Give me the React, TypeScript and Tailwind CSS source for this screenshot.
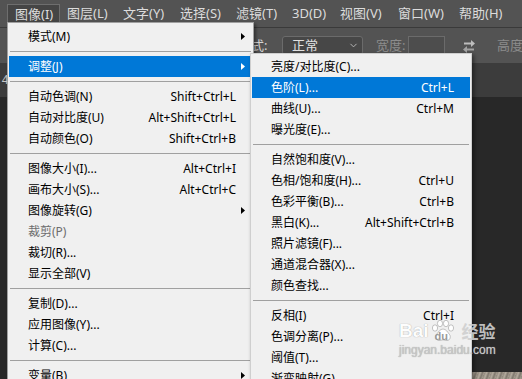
import { ChevronDown } from "lucide-react"

type Item =
  | "sep"
  | { label: string; shortcut?: string; arrow?: boolean; active?: boolean; disabled?: boolean }

const topMenus = [
  { label: "图像(I)", w: "w-[53px]", open: true },
  { label: "图层(L)", w: "w-[56px]" },
  { label: "文字(Y)", w: "w-[57px]" },
  { label: "选择(S)", w: "w-[56px]" },
  { label: "滤镜(T)", w: "w-[56px]" },
  { label: "3D(D)", w: "w-[48px]" },
  { label: "视图(V)", w: "w-[58px]" },
  { label: "窗口(W)", w: "w-[61px]" },
  { label: "帮助(H)", w: "w-[60px]" },
]

const imageMenu: Item[] = [
  { label: "模式(M)", arrow: true },
  "sep",
  { label: "调整(J)", arrow: true, active: true },
  "sep",
  { label: "自动色调(N)", shortcut: "Shift+Ctrl+L" },
  { label: "自动对比度(U)", shortcut: "Alt+Shift+Ctrl+L" },
  { label: "自动颜色(O)", shortcut: "Shift+Ctrl+B" },
  "sep",
  { label: "图像大小(I)...", shortcut: "Alt+Ctrl+I" },
  { label: "画布大小(S)...", shortcut: "Alt+Ctrl+C" },
  { label: "图像旋转(G)", arrow: true },
  { label: "裁剪(P)", disabled: true },
  { label: "裁切(R)..." },
  { label: "显示全部(V)" },
  "sep",
  { label: "复制(D)..." },
  { label: "应用图像(Y)..." },
  { label: "计算(C)..." },
  "sep",
  { label: "变量(B)", arrow: true },
]

const adjustMenu: Item[] = [
  { label: "亮度/对比度(C)..." },
  { label: "色阶(L)...", shortcut: "Ctrl+L", active: true },
  { label: "曲线(U)...", shortcut: "Ctrl+M" },
  { label: "曝光度(E)..." },
  "sep",
  { label: "自然饱和度(V)..." },
  { label: "色相/饱和度(H)...", shortcut: "Ctrl+U" },
  { label: "色彩平衡(B)...", shortcut: "Ctrl+B" },
  { label: "黑白(K)...", shortcut: "Alt+Shift+Ctrl+B" },
  { label: "照片滤镜(F)..." },
  { label: "通道混合器(X)..." },
  { label: "颜色查找..." },
  "sep",
  { label: "反相(I)", shortcut: "Ctrl+I" },
  { label: "色调分离(P)..." },
  { label: "阈值(T)..." },
  { label: "渐变映射(G)..." },
]

function Arrow({ white }: { white?: boolean }) {
  return (
    <svg width="4" height="7" viewBox="0 0 4 7" className={white ? "fill-white" : "fill-black"}>
      <polygon points="0,0 4,3.5 0,7" />
    </svg>
  )
}

function MenuList({ items }: { items: Item[] }) {
  return (
    <>
      {items.map((item, i) =>
        item === "sep" ? (
          <div key={i} className="flex h-[9px] items-center px-px">
            <div className="h-px w-full bg-[#a0a0a0]" />
          </div>
        ) : (
          <div
            key={i}
            className={`flex h-[21px] items-center pl-[19px] ${
              item.active ? "bg-[#0078d7] text-white" : item.disabled ? "text-[#6d6d6d]" : "text-black"
            }`}
          >
            <span className="flex-1 whitespace-nowrap">{item.label}</span>
            {item.shortcut && <span className="whitespace-nowrap">{item.shortcut}</span>}
            <span className="flex w-[16px] items-center pl-[5px]">
              {item.arrow && <Arrow white={item.active} />}
            </span>
          </div>
        ),
      )}
    </>
  )
}

function SwapIcon() {
  return (
    <svg width="12" height="14" viewBox="0 0 12 14" className="fill-[#bdbdbd]">
      <path d="M1 3.5h7V1l4 3.5L8 8V5.5H1z" />
      <path d="M11 9.5H4V7L0 10.5 4 14v-2.5h7z" opacity="0.75" />
    </svg>
  )
}

function Paw() {
  return (
    <svg width="26" height="22" viewBox="0 0 26 22" className="fill-white stroke-[#9a9a9a]" strokeWidth="0.6">
      <ellipse cx="5" cy="8" rx="2.6" ry="3.2" />
      <ellipse cx="10" cy="3.5" rx="2.6" ry="3.2" />
      <ellipse cx="16" cy="3.5" rx="2.6" ry="3.2" />
      <ellipse cx="21" cy="8" rx="2.6" ry="3.2" />
      <path d="M13 9c-3 0-4.5 3-6.5 5.5C4.8 16.7 6 20.5 9 20.5c1.6 0 2.6-.7 4-.7s2.4.7 4 .7c3 0 4.2-3.8 2.5-6C17.5 12 16 9 13 9z" />
    </svg>
  )
}

export default function App() {
  return (
    <div className="relative h-[379px] w-[522px] overflow-hidden bg-[#282828] font-['Noto_Sans','Noto_Sans_CJK_SC',sans-serif] text-[12px]">
      {/* menu bar */}
      <div className="flex h-[27px] items-start bg-[#535353] pl-[7px] pt-[4px] text-[13px] text-[#dcdcdc]">
        {topMenus.map((m) => (
          <div
            key={m.label}
            className={`${m.w} h-[19px] shrink-0 whitespace-nowrap pl-[7px] leading-[18px] ${
              m.open ? "border border-b-0 border-[#6e6e6e] bg-[#454545] pl-[6px]" : ""
            }`}
          >
            {m.label}
          </div>
        ))}
      </div>
      <div className="h-px bg-[#3a3a3a]" />

      {/* options bar */}
      <div className="flex h-[35px] items-center whitespace-nowrap bg-[#535353] text-[13px]">
        <span className="ml-[238px] w-[37px] shrink-0 text-[#d4d4d4]">模式:</span>
        <div className="ml-[7px] flex h-[19px] w-[81px] shrink-0 items-center justify-between rounded-[3px] border border-[#6b6b6b] bg-[#474747] pl-[9px] pr-[3px] text-[#e2e2e2]">
          <span>正常</span>
          <ChevronDown size={11} className="text-[#bcbcbc]" />
        </div>
        <span className="ml-[13px] w-[29px] shrink-0 text-[#8c8c8c]">宽度:</span>
        <div className="ml-[3px] h-[19px] w-[37px] shrink-0 border border-[#6b6b6b] bg-[#4d4d4d]" />
        <div className="ml-[18px] flex shrink-0 items-center">
          <SwapIcon />
        </div>
        <span className="ml-[22px] shrink-0 text-[#8c8c8c]">高度:</span>
      </div>

      {/* document tab strip + canvas */}
      <div className="flex h-[34px] items-center overflow-hidden bg-[#3c3c3c] text-[#c8c8c8]">
        <span className="-ml-[5px] shrink-0">14</span>
      </div>
      <div className="h-[275px] bg-[#282828]" />
      <div className="ml-[472px] h-[7px] w-[50px] bg-[repeating-linear-gradient(110deg,#8f877c_0px,#b3aa9d_2px,#7f786e_4px,#a69d90_6px)]" />

      {/* image menu */}
      <div className="absolute left-[7px] top-[22px] w-[247px] border border-[#a0a0a0] bg-[#f0f0f0] px-px pt-[3px] shadow-[2px_2px_3px_rgba(0,0,0,0.4)]">
        <MenuList items={imageMenu} />
      </div>

      {/* adjustments submenu */}
      <div className="absolute left-[250px] top-[53px] w-[222px] border border-[#cfcfcf] bg-[#f0f0f0] px-px pt-[2px] shadow-[2px_2px_4px_rgba(0,0,0,0.45)]">
        <MenuList items={adjustMenu} />
      </div>

      {/* watermark */}
      <div className="pointer-events-none absolute left-[399px] top-[320px] text-white">
        <div className="flex items-end">
          <span className="font-['Liberation_Sans',sans-serif] text-[19px] font-bold leading-none opacity-90 [text-shadow:0_0_1px_#8a8a8a]">
            Bai
          </span>
          <div className="relative -mb-[2px] ml-[1px]">
            <Paw />
            <span className="absolute left-[5px] top-[11px] font-['Liberation_Sans',sans-serif] text-[11px] font-bold leading-none text-[#9a9a9a]">
              du
            </span>
          </div>
          <span className="ml-[6px] text-[17px] font-bold leading-none text-[#cfcfcf] opacity-90">经验</span>
        </div>
        <div className="mt-[4px] font-['Liberation_Sans',sans-serif] text-[12px] leading-none text-[#c9c9c9] [text-shadow:0_0_1px_#9a9a9a]">
          jingyan.baidu.com
        </div>
      </div>
    </div>
  )
}
